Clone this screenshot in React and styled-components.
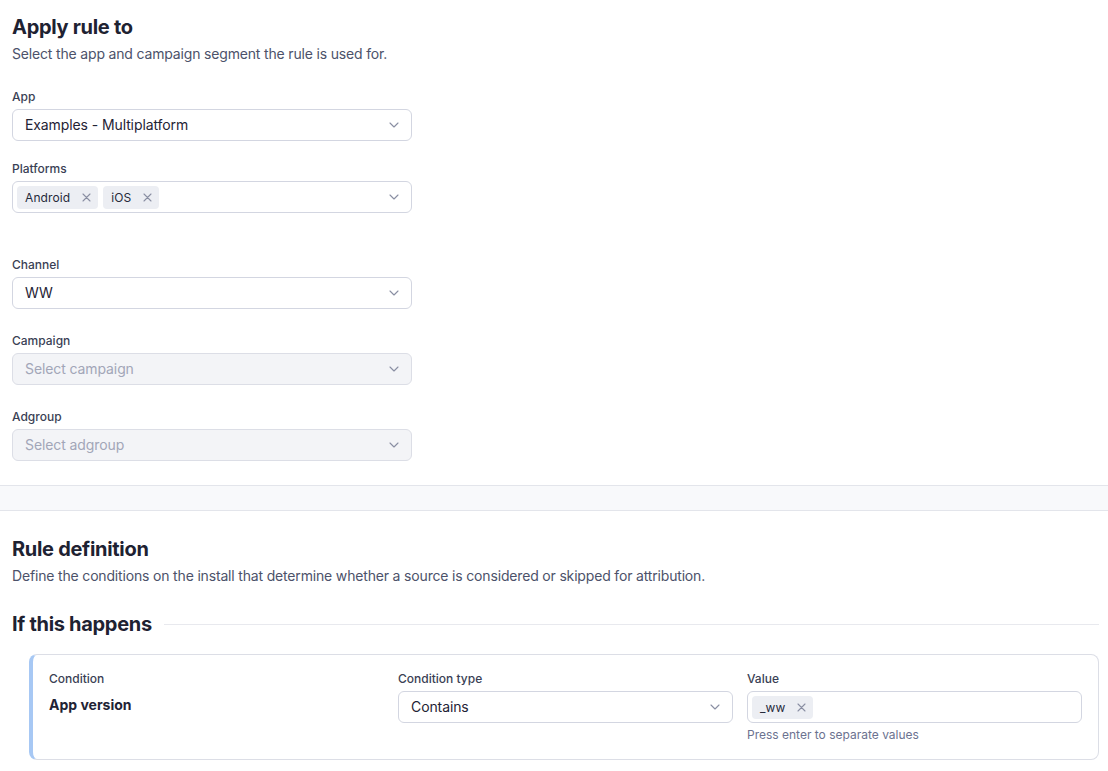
import React from 'react';
import styled, { createGlobalStyle } from 'styled-components';

const GlobalStyle = createGlobalStyle`
    body {
        margin: 0;
        background: #ffffff;
        font-family: Inter, 'Noto Sans', sans-serif;
        color: #1f2335;
        -webkit-font-smoothing: antialiased;
    }
`;

const Page = styled.div`
    width: 1108px;
`;

const Section = styled.section`
    padding: 13px 9px 24px 12px;
`;

const Title = styled.h2`
    margin: 0;
    font-size: 20px;
    line-height: 28px;
    font-weight: 700;
    color: #1e2232;
    letter-spacing: -0.3px;
`;

const Subtitle = styled.p`
    margin: 0 0 22px;
    font-size: 14px;
    line-height: 26px;
    color: #4c526a;
    letter-spacing: -0.17px;
`;

const Field = styled.div`
    width: 400px;
    margin-bottom: ${(p) => p.gap ?? 24}px;

    &:last-child {
        margin-bottom: 0;
    }
`;

const Label = styled.div`
    font-size: 12px;
    line-height: 16px;
    font-weight: 500;
    color: #3a3f55;
    margin-bottom: 4px;
`;

const SelectBox = styled.div`
    height: 32px;
    box-sizing: border-box;
    display: flex;
    align-items: center;
    gap: 5px;
    padding: 0 12px 1px ${(p) => (p.chips ? 4 : 12)}px;
    border: 1px solid ${(p) => (p.disabled ? '#dcdee6' : '#d3d6e1')};
    border-radius: 6px;
    background: ${(p) => (p.disabled ? '#f3f4f7' : '#ffffff')};
    font-size: 14px;
    letter-spacing: -0.1px;
    color: ${(p) => (p.disabled ? '#a2a6b8' : '#1f2335')};
`;

const SelectText = styled.span`
    flex: 1;
    white-space: nowrap;
`;

const Spacer = styled.span`
    flex: 1;
`;

const Chip = styled.span`
    display: inline-flex;
    align-items: center;
    gap: 12px;
    height: 23px;
    margin-top: 1px;
    padding: 0 7px 0 8px;
    border-radius: 4px;
    background: #eceef3;
    font-size: 12px;
    letter-spacing: 0.1px;
    color: #262a3b;
`;

const Band = styled.div`
    height: 24px;
    background: #f8f9fb;
    border-top: 1px solid #e3e5eb;
    border-bottom: 1px solid #e3e5eb;
`;

const RuleSection = styled.section`
    padding: 24px 9px 12px 12px;
`;

const RuleSubtitle = styled(Subtitle)`
    margin-bottom: 21px;
`;

const GroupHeader = styled.div`
    display: flex;
    align-items: center;
    gap: 12px;
    margin-bottom: 16px;
`;

const GroupTitle = styled.h3`
    margin: 0;
    font-size: 20px;
    line-height: 28px;
    font-weight: 700;
    color: #1e2232;
    white-space: nowrap;
    letter-spacing: -0.3px;
`;

const Rule = styled.div`
    flex: 1;
    height: 1px;
    background: #e8e9ee;
`;

const Card = styled.div`
    margin-left: 17px;
    display: grid;
    grid-template-columns: repeat(3, 1fr);
    column-gap: 14px;
    padding: 16px 16px 17px 16px;
    border: 1px solid #dcdee6;
    border-left: 4px solid #a7c8f4;
    border-radius: 8px;
`;

const Column = styled.div`
    min-width: 0;
`;

const ConditionName = styled.div`
    margin-top: 9px;
    font-size: 14px;
    font-weight: 700;
    color: #1f2335;
`;

const Hint = styled.div`
    margin-top: 5px;
    font-size: 12px;
    line-height: 14px;
    color: #6c7290;
`;

const Chevron = () => (
    <svg width="10" height="6" viewBox="0 0 10 6" fill="none">
        <path d="M1 1l4 4 4-4" stroke="#8a8fa3" strokeWidth="1.1" strokeLinecap="round" strokeLinejoin="round" />
    </svg>
);

const Cross = () => (
    <svg width="9" height="9" viewBox="0 0 9 9" fill="none">
        <path d="M1 1l7 7M8 1L1 8" stroke="#8a8fa3" strokeWidth="1.1" strokeLinecap="round" />
    </svg>
);

const Select = ({ value, placeholder, disabled }) => (
    <SelectBox disabled={disabled}>
        <SelectText>{value || placeholder}</SelectText>
        <Chevron />
    </SelectBox>
);

const TagInput = ({ tags, withChevron }) => (
    <SelectBox chips>
        {tags.map((t) => (
            <Chip key={t}>
                {t}
                <Cross />
            </Chip>
        ))}
        <Spacer />
        {withChevron && <Chevron />}
    </SelectBox>
);

const App = () => {
    return (
        <Page>
            <GlobalStyle />
            <Section>
                <Title>Apply rule to</Title>
                <Subtitle>Select the app and campaign segment the rule is used for.</Subtitle>

                <Field gap={20}>
                    <Label>App</Label>
                    <Select value="Examples - Multiplatform" />
                </Field>
                <Field gap={44}>
                    <Label>Platforms</Label>
                    <TagInput tags={['Android', 'iOS']} withChevron />
                </Field>
                <Field>
                    <Label>Channel</Label>
                    <Select value="WW" />
                </Field>
                <Field>
                    <Label>Campaign</Label>
                    <Select placeholder="Select campaign" disabled />
                </Field>
                <Field>
                    <Label>Adgroup</Label>
                    <Select placeholder="Select adgroup" disabled />
                </Field>
            </Section>

            <Band />

            <RuleSection>
                <Title>Rule definition</Title>
                <RuleSubtitle>
                    Define the conditions on the install that determine whether a source is considered or skipped for attribution.
                </RuleSubtitle>

                <GroupHeader>
                    <GroupTitle>If this happens</GroupTitle>
                    <Rule />
                </GroupHeader>

                <Card>
                    <Column>
                        <Label>Condition</Label>
                        <ConditionName>App version</ConditionName>
                    </Column>
                    <Column>
                        <Label>Condition type</Label>
                        <Select value="Contains" />
                    </Column>
                    <Column>
                        <Label>Value</Label>
                        <TagInput tags={['_ww']} />
                        <Hint>Press enter to separate values</Hint>
                    </Column>
                </Card>
            </RuleSection>
        </Page>
    );
};

export default App;
